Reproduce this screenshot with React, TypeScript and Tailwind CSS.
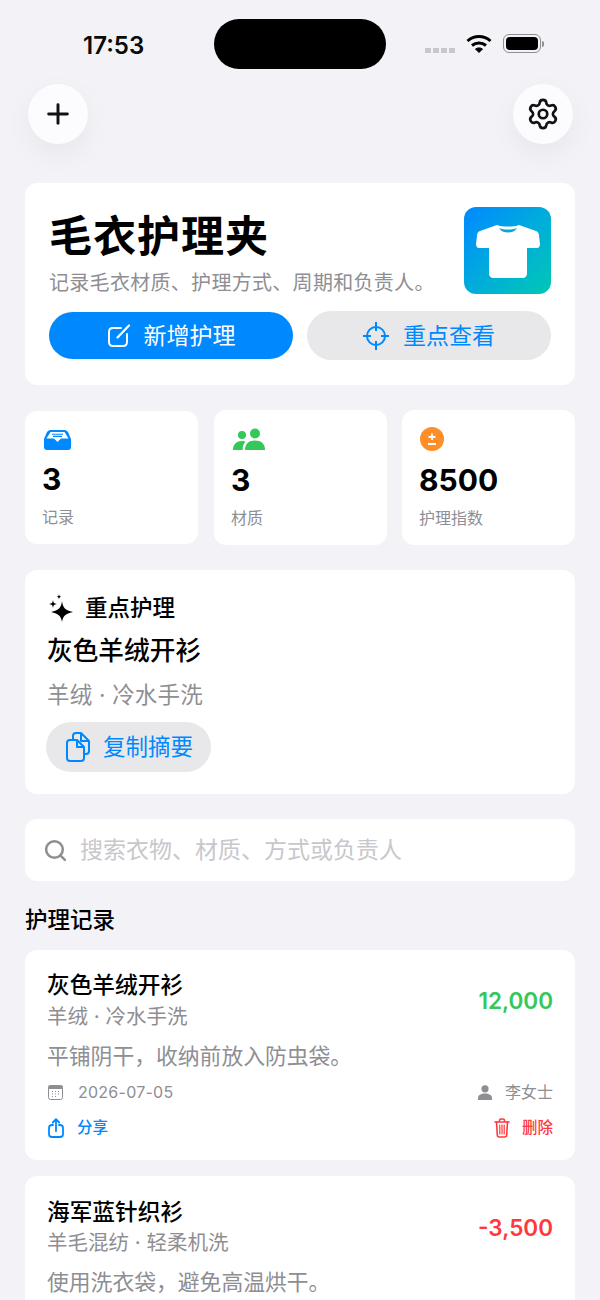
import { Plus, Search, Settings } from 'lucide-react';

const font = "font-['Inter','Noto_Sans_CJK_SC',sans-serif]";

function TeeIcon() {
  return (
    <svg width="64" height="53" viewBox="0 0 64 53" fill="none">
      <path d="M21 0 C26 2 38 2 43 0 L60 6 C62 7 63 8 63 11 L64 19 C64 21 63 23 61 23 L51 23 L51 49 C51 51 49 53 47 53 L17 53 C15 53 13 51 13 49 L13 23 L3 23 C1 23 0 21 0 19 L1 11 C1 8 2 7 4 6 Z" fill="white" />
      <path d="M23 3 C28 5 36 5 41 3 C38 9 26 9 23 3 Z" fill="#0aa5d8" />
    </svg>
  );
}

function PenIcon() {
  return (
    <svg width="24" height="24" viewBox="0 0 24 24" fill="none" stroke="white" strokeWidth="1.9" strokeLinecap="round">
      <path d="M14 4 H6 C3 4 2 5 2 8 V18 C2 21 3 22 6 22 H16 C19 22 20 21 20 18 V10" />
      <path d="M10.5 13.5 L22 1.5" strokeWidth="2.2" />
    </svg>
  );
}

function TrayIcon() {
  return (
    <svg width="27" height="20" viewBox="0 0 27 20">
      <path d="M6 0 H21 C22 0 23 1 24 2 L27 9 V17 C27 19 26 20 24 20 H3 C1 20 0 19 0 17 V9 L3 2 C4 1 5 0 6 0 Z" fill="#0088ff" />
      <path d="M6.5 2 H20.5 L24.5 8.5 H17 L13.5 12 L10 8.5 H2.5 Z" fill="white" />
      <path d="M8 4.2 H19 M9 6.4 H18" stroke="#0088ff" strokeWidth="1.1" />
    </svg>
  );
}

function PeopleIcon() {
  return (
    <svg width="32" height="22" viewBox="0 0 32 22" fill="#34c759">
      <circle cx="9" cy="7" r="4" />
      <circle cx="22" cy="5.5" r="5" />
      <path d="M0 22 C0 16 4 13 9 13 C10.5 13 11.5 13.3 12.5 13.8 C10.5 15.5 9.8 18 9.6 22 Z" />
      <path d="M12 22 C12 15.5 16 12.5 22 12.5 C28 12.5 32 15.5 32 22 Z" />
    </svg>
  );
}

function PlusMinusIcon() {
  return (
    <svg width="24" height="24" viewBox="0 0 24 24">
      <circle cx="12" cy="12" r="12" fill="#ff8d28" />
      <path d="M12 6.5 V13 M8.5 9.8 H15.5 M8 17 H16" stroke="white" strokeWidth="1.8" />
    </svg>
  );
}

function SparkleIcon() {
  return (
    <svg width="26" height="28" viewBox="0 0 26 28" fill="black">
      <path d="M14 7 C15 14 17 16 25 18 C17 20 15 22 14 28 C13 22 11 20 3 18 C11 16 13 14 14 7 Z" />
      <path d="M5 6 C5.5 9 6 9.5 9 10 C6 10.5 5.5 11 5 14 C4.5 11 4 10.5 1 10 C4 9.5 4.5 9 5 6 Z" />
      <path d="M11 0 C11.3 2 11.7 2.4 13.5 2.7 C11.7 3 11.3 3.4 11 5.4 C10.7 3.4 10.3 3 8.5 2.7 C10.3 2.4 10.7 2 11 0 Z" />
    </svg>
  );
}

function CrosshairIcon() {
  return (
    <svg width="26" height="28" viewBox="0 0 26 28" fill="none" stroke="#0088ff" strokeWidth="2">
      <circle cx="13" cy="14" r="9" />
      <path d="M13 0 V9 M13 19 V28 M0 14 H8 M18 14 H26" />
    </svg>
  );
}

function DocsIcon() {
  return (
    <svg width="24" height="30" viewBox="0 0 24 30" fill="none" stroke="#0088ff" strokeWidth="2" strokeLinejoin="round">
      <path d="M4 8 H11 L18 15 V26 C18 28 17 29 15 29 H4 C2 29 1 28 1 26 V11 C1 9 2 8 4 8 Z" />
      <path d="M11 8 V15 H18" />
      <path d="M7 8 V4 C7 2 8 1 10 1 H15 L23 9 V19 C23 21 22 22 20 22 H18" />
      <path d="M15 1 V9 H23" />
    </svg>
  );
}

function CalendarIcon() {
  return (
    <svg width="15" height="15" viewBox="0 0 15 15">
      <rect x="0.5" y="0.5" width="14" height="14" rx="2" fill="white" stroke="#8e8e93" />
      <rect x="0.5" y="0.5" width="14" height="3.5" fill="#8e8e93" />
      <path d="M4 6.5 H5 M7 6.5 H8 M10 6.5 H11 M4 9 H5 M7 9 H8 M10 9 H11 M4 11.5 H5 M7 11.5 H8" stroke="#8e8e93" />
    </svg>
  );
}

function PersonIcon() {
  return (
    <svg width="14" height="15" viewBox="0 0 14 15" fill="#8e8e93">
      <circle cx="7" cy="3.8" r="3.6" />
      <path d="M0 15 V13 C0 10 3 8.5 7 8.5 C11 8.5 14 10 14 13 V15 Z" />
    </svg>
  );
}

function ShareIcon() {
  return (
    <svg width="16" height="20" viewBox="0 0 16 20" fill="none" stroke="#0088ff" strokeWidth="1.8" strokeLinecap="round" strokeLinejoin="round">
      <path d="M5 7 H4 C2 7 1 8 1 10 V16 C1 18 2 19 4 19 H12 C14 19 15 18 15 16 V10 C15 8 14 7 12 7 H11" />
      <path d="M8 13 V1.5 M4.8 4.5 L8 1.2 L11.2 4.5" />
    </svg>
  );
}

function TrashIcon() {
  return (
    <svg width="16" height="20" viewBox="0 0 16 20" fill="none" stroke="#ff383c" strokeWidth="1.6" strokeLinecap="round">
      <path d="M1 4 H15 M5.5 4 V2.5 C5.5 1.5 6 1 7 1 H9 C10 1 10.5 1.5 10.5 2.5 V4" />
      <path d="M2.5 4 L3.3 17 C3.4 18.3 4 19 5.2 19 H10.8 C12 19 12.6 18.3 12.7 17 L13.5 4" />
      <path d="M5.8 7 V16 M8 7 V16 M10.2 7 V16" strokeWidth="1.2" />
    </svg>
  );
}

function Stat({ icon, value, label, cls, iconCls, valueCls }: { icon: React.ReactNode; value: string; label: string; cls: string; iconCls: string; valueCls: string }) {
  return (
    <div className={`flex w-[173px] shrink-0 flex-col rounded-xl bg-white pt-[17px] pl-[17px] ${cls}`}>
      <div className={`flex h-[24px] items-center ${iconCls}`}>{icon}</div>
      <div className={`text-[30px] leading-[40px] font-bold text-black ${valueCls}`}>{value}</div>
      <div className="mt-[7px] text-[16px] leading-[22px] text-[#8e8e93]">{label}</div>
    </div>
  );
}

export default function App() {
  return (
    <div className={`h-[1300px] w-[600px] overflow-hidden bg-[#f2f2f7] ${font}`}>
      {/* status bar */}
      <div className="relative h-[84px]">
        <div className="absolute top-[19px] left-[214px] h-[50px] w-[172px] rounded-[25px] bg-black" />
        <div className="absolute top-[31px] left-[83px] text-[24px] leading-[30px] font-semibold text-[#0b0b0b]">17:53</div>
        <div className="absolute top-[48px] left-[425px] flex gap-[2px]">
          <span className="h-[5px] w-[6px] bg-[#c7c7cc]" />
          <span className="h-[5px] w-[6px] bg-[#c7c7cc]" />
          <span className="h-[5px] w-[6px] bg-[#c7c7cc]" />
          <span className="h-[5px] w-[6px] bg-[#c7c7cc]" />
        </div>
        <svg className="absolute top-[34px] left-[466px]" width="26" height="19" viewBox="0 0 26 19" fill="none" stroke="black" strokeWidth="3">
          <path d="M1.5 7 C8 1 18 1 24.5 7" />
          <path d="M6 11.5 C10 8 16 8 20 11.5" />
          <path d="M13 18.5 L9.5 15 C11.5 13.5 14.5 13.5 16.5 15 Z" fill="black" strokeWidth="1" />
        </svg>
        <div className="absolute top-[34px] left-[503px] flex items-center">
          <div className="h-[19px] w-[38px] rounded-[6px] border border-[#8e8e93] p-[2px]">
            <div className="h-full w-full rounded-[4px] bg-black" />
          </div>
          <div className="ml-[1px] h-[6px] w-[2px] rounded-r-sm bg-[#8e8e93]" />
        </div>
      </div>

      {/* top actions */}
      <div className="flex justify-between pr-[27px] pl-[28px]">
        <button className="flex size-[60px] items-center justify-center rounded-full bg-[#fcfcfe] shadow-[0_10px_28px_rgba(0,0,0,0.05)]">
          <Plus size={32} strokeWidth={2.2} className="text-[#111]" />
        </button>
        <button className="flex size-[60px] items-center justify-center rounded-full bg-[#fcfcfe] shadow-[0_10px_28px_rgba(0,0,0,0.05)]">
          <Settings size={34} strokeWidth={1.9} className="text-[#111]" />
        </button>
      </div>

      <div className="mt-[39px] flex flex-col px-[25px]">
        {/* hero */}
        <div className="h-[202px] rounded-xl bg-white px-[24px] pt-[24px]">
          <div className="flex justify-between">
            <div>
              <div className="mt-[5px] text-[43px] leading-[48px] font-bold tracking-[1px] text-black">毛衣护理夹</div>
              <div className="mt-[9px] text-[20px] leading-[28px] tracking-[0.3px] text-[#8e8e93]">记录毛衣材质、护理方式、周期和负责人。</div>
            </div>
            <div className="flex size-[87px] items-center justify-center rounded-xl bg-gradient-to-br from-[#0088ff] to-[#00c8b3] pt-px">
              <TeeIcon />
            </div>
          </div>
          <div className="mt-[14px] flex items-center gap-[14px]">
            <button className="flex h-[47px] w-[244px] items-center justify-center gap-[13px] rounded-full bg-[#0088ff] text-[23px] text-white">
              <PenIcon />
              <span className="pt-[2px]">新增护理</span>
            </button>
            <button className="flex h-[49px] w-[244px] items-center justify-center gap-[14px] rounded-full bg-[#e8e8ea] text-[23px] text-[#0088ff]">
              <CrosshairIcon />
              <span className="pt-[2px]">重点查看</span>
            </button>
          </div>
        </div>

        {/* stats */}
        <div className="mt-[25px] flex h-[135px] items-center">
          <Stat cls="mr-[16px] h-[133px]" iconCls="ml-[2px]" valueCls="mt-[7px]" icon={<TrayIcon />} value="3" label="记录" />
          <Stat cls="mr-[15px] h-[135px]" iconCls="ml-[2px]" valueCls="mt-[9px]" icon={<PeopleIcon />} value="3" label="材质" />
          <Stat cls="h-[135px]" iconCls="ml-px" valueCls="mt-[9px]" icon={<PlusMinusIcon />} value="8500" label="护理指数" />
        </div>

        {/* highlight */}
        <div className="mt-[25px] h-[224px] rounded-xl bg-white px-[22px] pt-[24px]">
          <div className="flex items-center gap-[11px] pl-px">
            <SparkleIcon />
            <span className="text-[22.5px] leading-[28px] font-medium text-black">重点护理</span>
          </div>
          <div className="mt-[12px] text-[25.7px] leading-[34px] font-medium text-black">灰色羊绒开衫</div>
          <div className="mt-[12px] text-[22.5px] leading-[30px] tracking-[0.2px] text-[#8e8e93]">羊绒 · 冷水手洗</div>
          <button className="mt-[12px] -ml-px flex h-[50px] w-[165px] items-center justify-center gap-[13px] rounded-full bg-[#e8e8ea] pl-[2px] text-[22.5px] text-[#0088ff]">
            <DocsIcon />
            <span>复制摘要</span>
          </button>
        </div>

        {/* search */}
        <div className="mt-[25px] flex h-[62px] items-center gap-[12px] rounded-xl bg-white pl-[18px]">
          <Search size={25} strokeWidth={2.4} className="text-[#8e8e93]" />
          <span className="text-[23px] text-[#c7c7cc]">搜索衣物、材质、方式或负责人</span>
        </div>

        <div className="mt-[24px] text-[22.5px] leading-[30px] font-medium text-black">护理记录</div>

        {/* records */}
        <div className="mt-[15px] h-[210px] rounded-xl bg-white px-[22px] pt-[21px]">
          <div className="flex justify-between">
            <div>
              <div className="text-[22.7px] leading-[28px] font-medium text-black">灰色羊绒开衫</div>
              <div className="mt-[5px] text-[20.5px] leading-[26px] text-[#8e8e93]">羊绒 · 冷水手洗</div>
            </div>
            <div className="mt-[15px] text-[22.5px] leading-[30px] font-semibold text-[#34c759]">12,000</div>
          </div>
          <div className="mt-[12px] text-[21.8px] leading-[28px] text-[#8e8e93]">平铺阴干，收纳前放入防虫袋。</div>
          <div className="mt-[10px] flex items-center justify-between text-[#8e8e93]">
            <div className="flex items-center gap-[15px] pl-px">
              <CalendarIcon />
              <span className="text-[16px] leading-[24px] tracking-[0.25px]">2026-07-05</span>
            </div>
            <div className="flex items-center gap-[13px]">
              <PersonIcon />
              <span className="text-[16px] leading-[24px]">李女士</span>
            </div>
          </div>
          <div className="mt-[12px] flex items-center justify-between">
            <div className="flex items-center gap-[13px] pl-px text-[#0088ff]">
              <ShareIcon />
              <span className="text-[15.5px] leading-[24px] font-medium">分享</span>
            </div>
            <div className="flex items-center gap-[12px] text-[#ff383c]">
              <TrashIcon />
              <span className="text-[15.5px] leading-[24px] font-medium">删除</span>
            </div>
          </div>
        </div>

        <div className="mt-[16px] h-[210px] rounded-xl bg-white px-[22px] pt-[22px]">
          <div className="flex justify-between">
            <div>
              <div className="text-[22.7px] leading-[28px] font-medium text-black">海军蓝针织衫</div>
              <div className="mt-[4px] text-[20.5px] leading-[26px] text-[#8e8e93]">羊毛混纺 · 轻柔机洗</div>
            </div>
            <div className="mt-[15px] text-[22.5px] leading-[30px] font-semibold text-[#ff383c]">-3,500</div>
          </div>
          <div className="mt-[12px] text-[21.8px] leading-[28px] text-[#8e8e93]">使用洗衣袋，避免高温烘干。</div>
        </div>
      </div>
    </div>
  );
}
